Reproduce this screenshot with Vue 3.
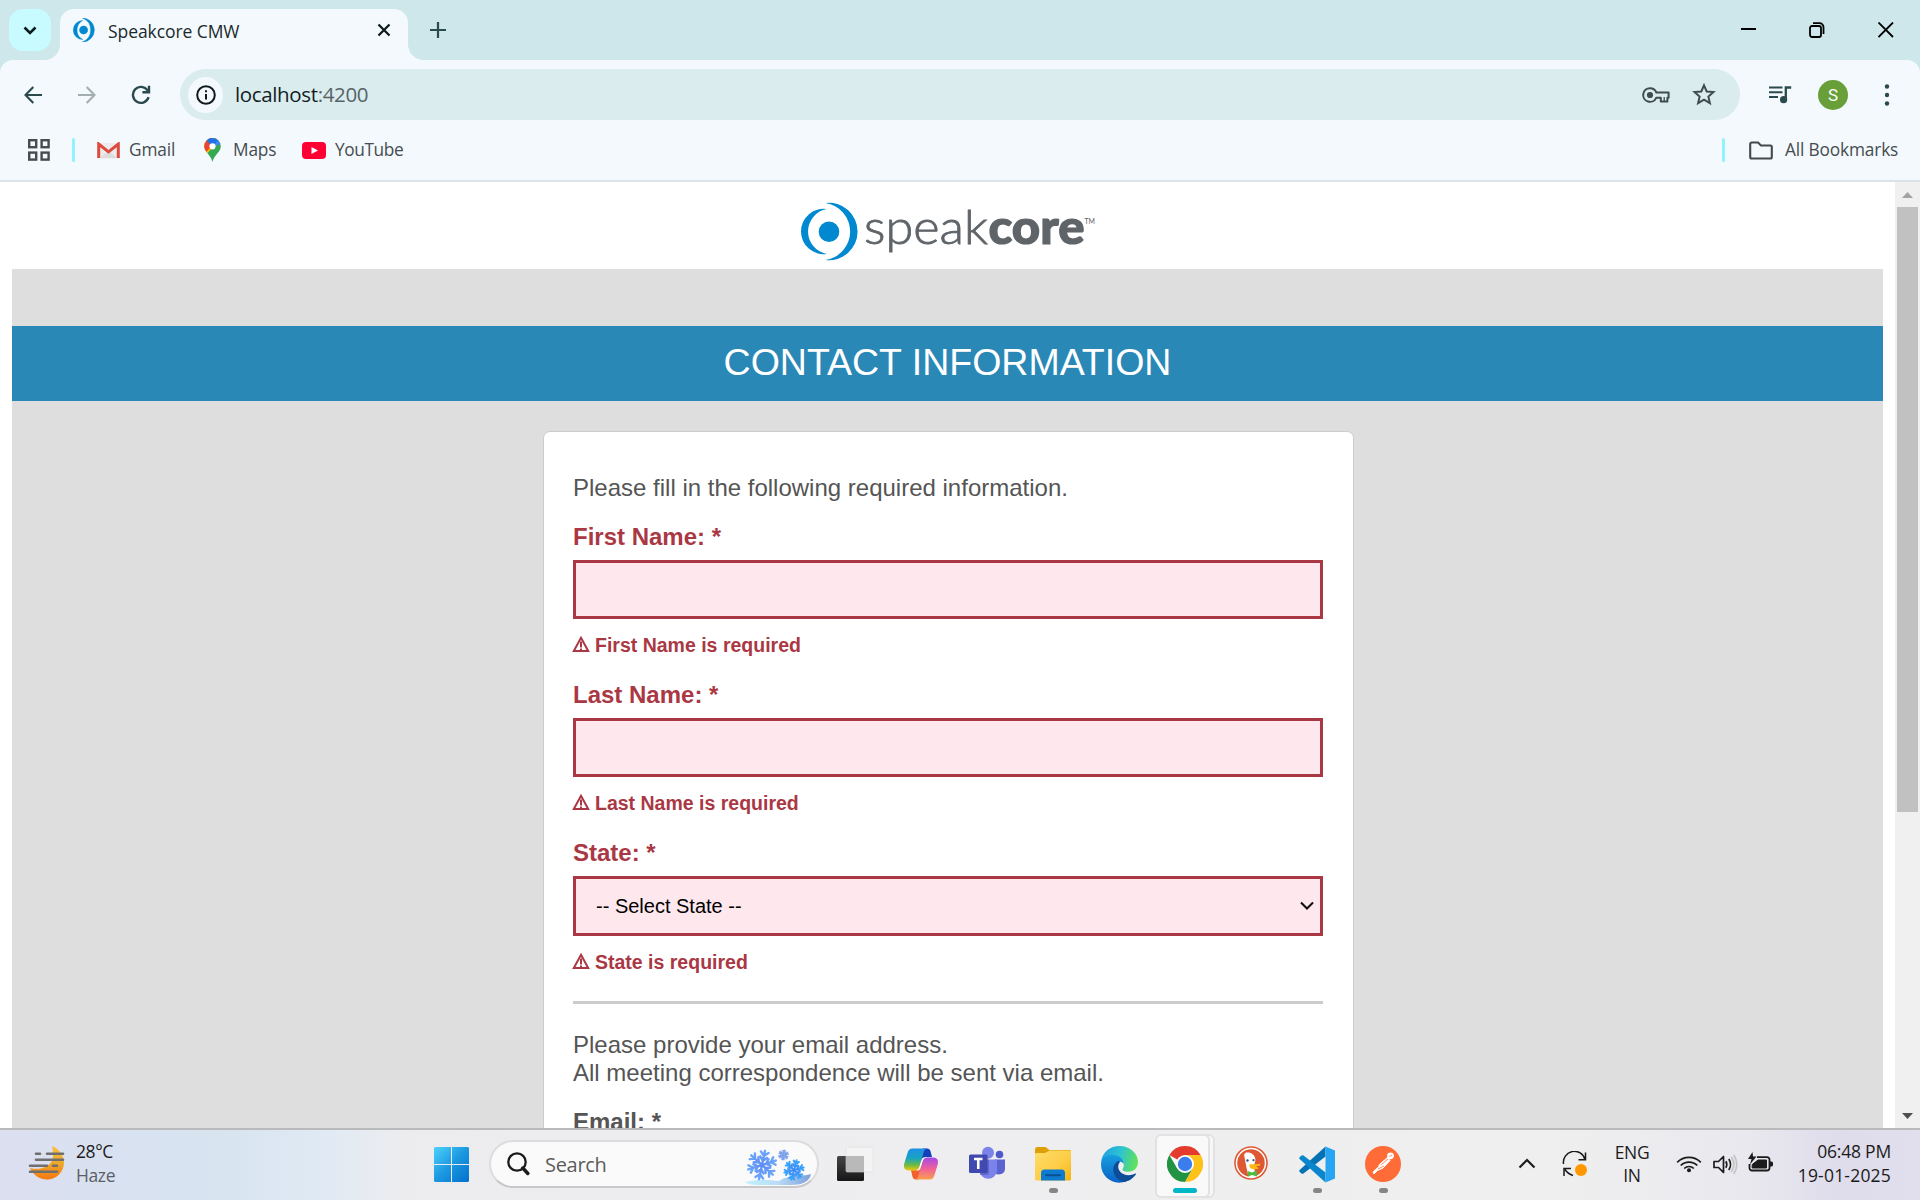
<script setup>
const fields = [
  { label: 'First Name: *', error: 'First Name is required', type: 'input' },
  { label: 'Last Name: *', error: 'Last Name is required', type: 'input' },
  { label: 'State: *', error: 'State is required', type: 'select' },
]
const flakes = [
  { t: 'translate(18 16) rotate(12)', s: 14.5, w: 2.4, c: 'url(#flakeBlue)' },
  { t: 'translate(39.5 6) rotate(8)', s: 5, w: 1.2, c: '#7ba0ea' },
  { t: 'translate(50 21) rotate(15)', s: 10, w: 2, c: 'url(#flakeCyan)' },
]
const arms = [0, 60, 120, 180, 240, 300]
</script>

<template>
  <div class="screen">
    <header class="tabstrip">
      <div class="tabsearch">
        <svg width="14" height="9" viewBox="0 0 14 9"><path d="M1.5 1.5L7 7l5.500-5.500" fill="none" stroke="#0b1a1c" stroke-width="2.6" /></svg>
      </div>
      <div class="tab">
        <svg class="favicon" width="24" height="24" viewBox="0 0 58 58"><circle cx="28" cy="29" r="10.5" fill="#0089d1" /><path d="M26 6A23 23 0 1 0 26 52A26 26 0 0 1 26 6ZM25 0A28.7 28.7 0 1 1 25 58A31 31 0 0 0 25 0Z" fill="#0089d1" stroke="#0089d1" stroke-width="1" /></svg>
        <span class="tabtitle">Speakcore CMW</span>
        <svg class="tabclose" width="14" height="14" viewBox="0 0 14 14"><path d="M1.5 1.5l11 11M12.5 1.5l-11 11" stroke="#101b1d" stroke-width="2.3" /></svg>
      </div>
      <svg class="newtab" width="16" height="16" viewBox="0 0 16 16"><path d="M8 0v16M0 8h16" stroke="#2b4a4e" stroke-width="2.2" /></svg>
      <div class="wincontrols">
        <svg width="16" height="16" viewBox="0 0 16 16"><path d="M1 7h15" stroke="#000" stroke-width="2" /></svg>
        <svg width="16" height="16" viewBox="0 0 16 16" fill="none" stroke="#000" stroke-width="1.8"><rect x="1" y="4" width="11" height="11" rx="2" /><path d="M4 1.2h6.5a4 4 0 0 1 4 4V12" /></svg>
        <svg width="16" height="16" viewBox="0 0 16 16"><path d="M.5 .5l14.5 14.5M15 .5L.5 15" stroke="#000" stroke-width="1.8" /></svg>
      </div>
    </header>

    <div class="chrome">
      <div class="toolbar">
        <svg class="back" width="18" height="18" viewBox="0 0 18 18" fill="none" stroke="#2b4a4e" stroke-width="2.1"><path d="M18 9H1.8M9.3 1L1.5 9l7.8 8" /></svg>
        <svg class="forward" width="18" height="18" viewBox="0 0 18 18" fill="none" stroke="#a2aeb0" stroke-width="2.1"><path d="M0 9h16.2M8.7 1l7.8 8-7.8 8" /></svg>
        <svg class="reload" width="20" height="20" viewBox="0 0 20 20" fill="none" stroke="#2b4a4e" stroke-width="2.4"><path d="M17.6 12.2A8 8 0 1 1 16.6 5.4L18 7" /><path d="M18 .8V7.2h-6.6" /></svg>
        <div class="omnibox">
          <div class="info">
            <svg width="20" height="20" viewBox="0 0 20 20"><circle cx="10" cy="10" r="8.8" fill="none" stroke="#10191b" stroke-width="2" /><path d="M10 9v5.6M10 5.2v2.1" stroke="#10191b" stroke-width="2" /></svg>
          </div>
          <span class="url">localhost<i>:4200</i></span>
          <svg class="key" width="28" height="16" viewBox="0 0 28 16"><path d="M8 1.2a6.8 6.8 0 1 0 6.2 9.6h4.6v3.6h6.6V10.8h1.2V5.6H14.4A6.8 6.8 0 0 0 8 1.2Z" fill="none" stroke="#3f4c4f" stroke-width="2" stroke-linejoin="round" /><circle cx="8" cy="8" r="3.1" fill="#3f4c4f" /><path d="M22.2 10v4" stroke="#3f4c4f" stroke-width="1.3" /></svg>
          <svg class="star" width="24" height="23" viewBox="0 0 24 23"><path d="M12 2.3l2.7 6.2 6.8.6-5.1 4.5 1.5 6.6-5.9-3.5-5.9 3.5 1.5-6.6L2.5 9.1l6.8-.6Z" fill="none" stroke="#3f4c4f" stroke-width="2" /></svg>
        </div>
        <svg class="media" width="24" height="18" viewBox="0 0 24 18"><path d="M1 1.500h13.500M1 6.200h13.500M1 11h9" stroke="#2b4a4e" stroke-width="2.1" /><path d="M17.800 13.500V1.500h5.400" fill="none" stroke="#2b4a4e" stroke-width="2.3" /><circle cx="15.600" cy="13.700" r="3.600" fill="#2b4a4e" /></svg>
        <div class="avatar">S</div>
        <svg class="dots" width="6" height="22" viewBox="0 0 6 22" fill="#2b4a4e"><circle cx="3" cy="2.5" r="2.2" /><circle cx="3" cy="11" r="2.2" /><circle cx="3" cy="19.5" r="2.2" /></svg>
      </div>
      <div class="bookmarks">
        <svg class="apps" width="22" height="22" viewBox="0 0 22 22" fill="none" stroke="#464c50" stroke-width="2.4"><rect x="1.2" y="1.2" width="7" height="7" /><rect x="13.6" y="1.2" width="7" height="7" /><rect x="1.2" y="13.6" width="7" height="7" /><rect x="13.6" y="13.6" width="7" height="7" /></svg>
        <b class="sep"></b>
        <div class="mark gmail">
          <svg width="23" height="17" viewBox="0 0 23 17"><rect x="1" y="1" width="21" height="15.5" fill="#ececec" /><path d="M3 16l8.5-7 8.5 7Z" fill="#dcdcdc" /><path d="M1.7 16V2l9.8 7.8L21.300 2V16" fill="none" stroke="#dd4b3e" stroke-width="3" /></svg>
          <span>Gmail</span>
        </div>
        <div class="mark maps">
          <svg width="17" height="24" viewBox="0 0 17 24"><defs><clipPath id="pin"><path d="M8.500 0A8.300 8.300 0 0 0 .2 8.300C.2 14 7 17 8.500 24 10 17 16.800 14 16.800 8.300A8.300 8.300 0 0 0 8.500 0Z" /></clipPath></defs><g clip-path="url(#pin)"><path d="M0 0h17v24H0Z" fill="#34a853" /><path d="M0 0h17L0 19Z" fill="#fbbc04" /><path d="M0 0h8v8L2 14 0 9Z" fill="#ea4335" /><path d="M2 2L9 8.500 17 0V0H0Z" fill="#1a73e8" /><path d="M9 8.500L14 2 17 4 17 6Z" fill="#4285f4" /></g><circle cx="8.500" cy="8.300" r="3.100" fill="#fff" /></svg>
          <span>Maps</span>
        </div>
        <div class="mark tube">
          <svg width="24" height="17" viewBox="0 0 24 17"><rect width="24" height="17" rx="4" fill="#ff0033" /><path d="M9.500 5v7l6.500-3.500Z" fill="#fff" /></svg>
          <span>YouTube</span>
        </div>
        <b class="sep right"></b>
        <svg class="folder" width="24" height="19" viewBox="0 0 24 19"><path d="M1.200 3A1.500 1.500 0 0 1 2.700 1.500H9L12 4.500h9.500A1.300 1.300 0 0 1 22.800 6v10a1.500 1.500 0 0 1-1.500 1.500H2.700A1.500 1.500 0 0 1 1.200 16Z" fill="none" stroke="#44494d" stroke-width="2.100" /></svg>
        <span class="allbm">All Bookmarks</span>
      </div>
    </div>

    <div class="viewport">
      <main class="page">
        <div class="brand">
          <svg width="296" height="58" viewBox="0 0 296 58">
            <circle cx="28" cy="28.700" r="10.300" fill="#0089d1" />
            <path d="M25.700 6A22.700 22.700 0 1 0 25.700 51A22.900 22.900 0 0 1 25.700 6Z" fill="#0089d1" />
            <path d="M24.500 0A28.700 28.700 0 1 1 24.500 57A28.800 28.800 0 0 0 24.500 0Z" fill="#0089d1" />
            <text class="thin" x="63" y="40.500" textLength="124" lengthAdjust="spacingAndGlyphs">speak</text>
            <text class="fat" x="187.500" y="40.500" textLength="96" lengthAdjust="spacingAndGlyphs">core</text>
            <text class="tm" x="283.500" y="21" textLength="10.500" lengthAdjust="spacingAndGlyphs">TM</text>
          </svg>
        </div>
        <div class="canvas">
          <h1>CONTACT INFORMATION</h1>
          <section class="card">
            <p class="lead">Please fill in the following required information.</p>
            <div v-for="f in fields" :key="f.label" class="field" :class="f.type">
              <label>{{ f.label }}</label>
              <div class="control">
                <template v-if="f.type === 'select'">
                  <span>-- Select State --</span>
                  <svg width="14" height="10" viewBox="0 0 14 10"><path d="M1 1.500l6 6 6-6" fill="none" stroke="#111" stroke-width="2.100" /></svg>
                </template>
              </div>
              <div class="error">
                <svg width="18" height="17" viewBox="0 0 18 17"><path d="M9 1.800L16.200 15H1.800Z" fill="none" stroke="#aa3844" stroke-width="2" /><path d="M9 5.500v6M9 12.500v2" stroke="#aa3844" stroke-width="2" /></svg>
                <span>{{ f.error }}</span>
              </div>
            </div>
            <hr />
            <p class="lead second">Please provide your email address.<br />All meeting correspondence will be sent via email.</p>
            <label class="plain">Email: *</label>
          </section>
        </div>
      </main>
      <aside class="scrollbar">
        <svg width="25" height="25" viewBox="0 0 25 25"><path d="M7 16h11l-5.500-6Z" fill="#a3a3a3" /></svg>
        <div class="thumb"></div>
        <svg class="down" width="25" height="25" viewBox="0 0 25 25"><path d="M7 10h11l-5.500 6Z" fill="#505050" /></svg>
      </aside>
    </div>

    <footer class="taskbar">
      <div class="weather">
        <svg width="38" height="36" viewBox="0 0 38 36"><defs><linearGradient id="moon" x1="0" y1="0" x2="0" y2="1"><stop offset="0" stop-color="#fcbf38" /><stop offset=".5" stop-color="#efa92a" /><stop offset="1" stop-color="#f4780f" /></linearGradient></defs><path d="M24 1C31 4 36 10 36 18A17 17 0 0 1 19 34.500C12 34.500 5 30 2 23c11 3 22-2 23-11 .400-4-.400-8-1-11Z" fill="url(#moon)" /><path d="M8 8.700h4M19 8.700h16M8 14.700h27M2 20.700h17M25 20.700h4M2 26.700h27" stroke="#6f6f70" stroke-width="2.600" stroke-linecap="round" /></svg>
        <div class="lines"><span>28°C</span><span class="dim">Haze</span></div>
      </div>
      <svg class="start" width="35" height="35" viewBox="0 0 35 35"><defs><linearGradient id="win" x1="0" y1="0" x2="1" y2="1"><stop offset="0" stop-color="#4cd2fd" /><stop offset=".5" stop-color="#1b98e0" /><stop offset="1" stop-color="#0470cd" /></linearGradient></defs><path d="M1 0H17V17H0V1ZM18 0H34L35 1V17H18ZM0 18H17V35H1L0 34ZM18 18H35V34L34 35H18Z" fill="url(#win)" /></svg>
      <div class="search">
        <svg width="23" height="24" viewBox="0 0 23 24"><circle cx="10" cy="10" r="8.700" fill="none" stroke="#1b1b1b" stroke-width="2.300" /><path d="M15.800 16l5 5.500" stroke="#1b1b1b" stroke-width="3.400" stroke-linecap="round" /></svg>
        <span>Search</span>
        <svg class="snow" width="68" height="38" viewBox="0 0 68 38">
          <defs>
            <linearGradient id="flakeBlue" gradientUnits="userSpaceOnUse" x1="0" y1="-15" x2="0" y2="15"><stop offset="0" stop-color="#6ba9fb" /><stop offset="1" stop-color="#5570f0" /></linearGradient>
            <linearGradient id="flakeCyan" gradientUnits="userSpaceOnUse" x1="0" y1="-10" x2="0" y2="10"><stop offset="0" stop-color="#36a4fb" /><stop offset="1" stop-color="#4a6cf0" /></linearGradient>
            <linearGradient id="drift" x1="0" y1="0" x2="1" y2="0"><stop offset="0" stop-color="#c3f3fb" /><stop offset=".5" stop-color="#b9dcf8" /><stop offset="1" stop-color="#7d9fdb" /></linearGradient>
          </defs>
          <path d="M1 33C12 30 27 31 35 32 45 25 57 28 67 25 66 33 57 36 47 36H12C7 36 3 35 1 33Z" fill="url(#drift)" />
          <g v-for="f in flakes" :key="f.t" :transform="f.t" fill="none" :stroke="f.c" :stroke-width="f.w" stroke-linecap="round">
            <path v-for="a in arms" :key="a" :transform="`rotate(${a})`" :d="`M.01 0L0 ${-f.s}M${-f.s * 0.27} ${-f.s * 0.9}L0 ${-f.s * 0.65}L${f.s * 0.27} ${-f.s * 0.9}M${-f.s * 0.24} ${-f.s * 0.55}L0 ${-f.s * 0.3}L${f.s * 0.24} ${-f.s * 0.55}`" />
          </g>
        </svg>
      </div>
      <nav class="pinned">
        <div class="slot">
          <svg width="36" height="36" viewBox="0 0 36 36"><defs><linearGradient id="tv" x1="0" y1="0" x2="0" y2="1"><stop offset="0" stop-color="#454545" /><stop offset="1" stop-color="#161616" /></linearGradient></defs><rect x="0" y="10" width="27" height="25" rx="1.500" fill="url(#tv)" /><rect x="9" y="1" width="27" height="25" rx="1.500" fill="#f3f3f3" fill-opacity=".9" stroke="#ddd" stroke-width=".6" /><rect x="9" y="10" width="18" height="16" fill="#b9b9b9" /></svg>
        </div>
        <div class="slot">
          <svg width="36" height="36" viewBox="0 0 36 36"><defs><linearGradient id="cpA" x1="0" y1="0" x2="0" y2="1"><stop offset="0" stop-color="#1f8fe8" /><stop offset=".45" stop-color="#17a5c0" /><stop offset=".75" stop-color="#6cba45" /><stop offset="1" stop-color="#f0c70c" /></linearGradient><linearGradient id="cpB" x1="0" y1="0" x2="0" y2="1"><stop offset="0" stop-color="#a34be8" /><stop offset=".5" stop-color="#ef5f9c" /><stop offset="1" stop-color="#fb9f4a" /></linearGradient></defs><path d="M20 2.500h4c2 0 3 1.200 3.600 3L29 11h-7l-4 4Z" fill="#1440ba" /><path d="M16 33.500h-3c-2 0-3-1-3.600-3L8 24h6l5-5Z" fill="#f2602c" /><path d="M9.500 2.500H24c-2 .6-2.800 2-3.400 4l-4 14c-.8 2.800-2.200 4-5 4H6c-4.500 0-5.800-3-4.700-7L4.500 7c.9-3 2-4.500 5-4.500Z" fill="url(#cpA)" /><path d="M26.500 33.500H12c2-.6 2.800-2 3.400-4l4-14c.8-2.800 2.200-4 5-4H30c4.500 0 5.800 3 4.700 7L31.500 29c-.9 3-2 4.500-5 4.500Z" fill="url(#cpB)" /><path d="M20.500 11.500h3.800c-2.800 0-4.100 1.200-4.900 4l-2 7c-.8 1.800-2 2-3.200 2h-2.600c2.800 0 4.200-1.200 5-4l2-6.500c.5-1.700 1-2.100 1.900-2.500Z" fill="#fff" /></svg>
        </div>
        <div class="slot">
          <svg width="36" height="36" viewBox="0 0 36 36"><circle cx="30.500" cy="8.500" r="3.800" fill="#5059c9" /><path d="M26 13.500h10V23a6 6 0 0 1-10 4Z" fill="#5b63cf" /><circle cx="19" cy="6.800" r="6" fill="#7b83eb" /><path d="M10.500 13.500H28V25a8.800 8.800 0 0 1-17.500 0Z" fill="#7b83eb" /><path d="M13 13.500h7V27a2 2 0 0 1-2 2h-7Z" fill="#4c55b8" opacity=".6" /><rect x="0" y="8.500" width="18.500" height="18.500" rx="1.500" fill="#4049b0" /><path d="M5 13h8.500M9.250 13v10" stroke="#fff" stroke-width="2.600" /></svg>
        </div>
        <div class="slot">
          <svg width="36" height="36" viewBox="0 0 36 36"><defs><linearGradient id="fold" x1="0" y1="0" x2="1" y2="1"><stop offset="0" stop-color="#ffdc6a" /><stop offset=".6" stop-color="#fdcc44" /><stop offset="1" stop-color="#f5b40c" /></linearGradient></defs><path d="M0 3.500Q0 1 2 1H10.500L14.500 4H35Q36 4 36 5V12H0Z" fill="#dda005" /><path d="M0 8Q0 7 2 7H10L14.500 4.500H36V33Q36 34.500 34.500 34.500H1.500Q0 34.500 0 33Z" fill="url(#fold)" /><path d="M6 34.500V27a3.500 3.500 0 0 1 3.500-3.500h17A3.500 3.500 0 0 1 30 27v7.500Z" fill="#0f7bd0" /><path d="M11 29.200h14" stroke="#08508f" stroke-width="2" stroke-linecap="round" /></svg>
          <i class="run"></i>
        </div>
        <div class="slot">
          <svg width="37" height="37" viewBox="0 0 36 36"><defs><linearGradient id="eA" x1="0" y1=".3" x2="1" y2=".5"><stop offset="0" stop-color="#229fe5" /><stop offset=".5" stop-color="#2cc4cf" /><stop offset="1" stop-color="#62e15a" /></linearGradient><linearGradient id="eB" x1="0" y1="0" x2="0" y2="1"><stop offset="0" stop-color="#179fe0" /><stop offset="1" stop-color="#0a62c4" /></linearGradient></defs><path d="M0 16C1 6 9 0 18 0 28 0 36 7 36 15.500 36 22 31 25 26.500 25 22.500 25 20.500 23.500 21 22.500 23 20 23 15 18 12 11 8 3 11 0 16Z" fill="url(#eA)" /><path d="M0 18C0 12 5 8.500 11 8.500 17 8.500 22 12.500 22.200 17.500 20 14 14 14 13 20 12.200 27 18 33 25 34 13 39.500 0 30.500 0 18Z" fill="url(#eB)" /><path d="M16.500 14.500C9 18.500 11 32 22 35 27 34.500 31.500 31.500 34 27.500 34.300 27 33.600 26.600 33 27 28 29.500 20.500 28.500 18 24 16 20.500 16.700 17.500 18.500 15.500 18 14.700 17.300 14.300 16.500 14.500Z" fill="#0d4c97" /></svg>
        </div>
        <div class="slot active">
          <svg width="36" height="36" viewBox="0 0 36 36"><path d="M18 18L2.410 9A18 18 0 0 1 33.590 9Z" fill="#e33b2e" /><path d="M2.410 9L10.200 22.500 25.800 22.500 18 36A18 18 0 0 1 2.410 9Z" fill="#229342" /><path d="M18 36L25.800 22.500 18 18V9H33.590A18 18 0 0 1 18 36Z" fill="#fdc117" /><circle cx="18" cy="18" r="9" fill="#fff" /><circle cx="18" cy="18" r="7.200" fill="#3b7ded" /></svg>
          <i class="run on"></i>
        </div>
        <div class="slot">
          <svg width="34" height="34" viewBox="0 0 34 34"><circle cx="17" cy="17" r="16.800" fill="#de5833" /><circle cx="17" cy="17" r="14.500" fill="none" stroke="#fff" stroke-width="1.500" /><path d="M10.500 11C9.500 7.500 11.500 6 13.500 6.500 18 6.500 21 9 21.500 14L20 20 21.500 30.500Q18 31.800 14.500 30.700C13 24 11.500 17 10.500 11Z" fill="#fff" /><path d="M15.500 18.500C18 17.500 22 19 26.500 17.500L25.500 20H22L25 22.500C20 24 15.500 23 15.500 20.500Z" fill="#fdb913" /><path d="M13.500 25l4.500 1.500 5-2v6l-5-1.500-4 1.500Z" fill="#4cba3c" /><circle cx="13.500" cy="14.500" r="1.200" fill="#2d4f8e" /><circle cx="19.500" cy="14.200" r="1.100" fill="#2d4f8e" /></svg>
        </div>
        <div class="slot">
          <svg width="36" height="37" viewBox="0 0 36 36"><path d="M26.500 0V10L4.500 27Q3.500 27.700 2.500 27L.6 25.300Q-.2 24.300.6 23.500Z" fill="#0572b5" /><path d="M26.500 36V26L4.500 9Q3.500 8.300 2.500 9L.6 10.700Q-.2 11.700.6 12.500Z" fill="#0a86cd" /><path d="M26.500 0L36 4V32L26.500 36Z" fill="#27a5f2" /></svg>
          <i class="run"></i>
        </div>
        <div class="slot">
          <svg width="36" height="36" viewBox="0 0 36 36"><circle cx="18" cy="18" r="18" fill="#ff6c37" /><circle cx="25.500" cy="9.800" r="3.400" fill="#fff" /><path d="M22.500 11.500L25 14.500 18 22 12.500 24.500 9 28 8 26 13.500 21 14.500 18.500Z" fill="#fff" stroke="#fff" /><path d="M16 19l7-6M13 23l6-3M24.500 10.500l2.500-1.500" stroke="#ff6c37" stroke-width=".8" /></svg>
          <i class="run"></i>
        </div>
      </nav>
      <div class="tray">
        <svg class="chev" width="18" height="11" viewBox="0 0 18 11"><path d="M1.500 9.500L9 2l7.500 7.500" fill="none" stroke="#1d1d1d" stroke-width="2.200" /></svg>
        <svg class="sync" width="26" height="26" viewBox="0 0 26 26" fill="none" stroke="#1b1b1b" stroke-width="1.500"><path d="M1.500 13A11 11 0 0 1 23 8.500M23.500 1.500v7.200h-7M11 24.500Q6 23 3 18.500M2 25v-7.500h7" /><circle cx="19" cy="19" r="6" fill="#ff9800" stroke="none" /></svg>
        <div class="lang"><span>ENG</span><span>IN</span></div>
        <svg class="wifi" width="26" height="19" viewBox="0 0 26 19" fill="none" stroke="#1b1b1b" stroke-width="1.700"><path d="M1.200 8.300a16.700 16.700 0 0 1 23.600 0M4.700 11.500a11.700 11.700 0 0 1 16.600 0M8.200 14.500a6.800 6.800 0 0 1 9.600 0" /><circle cx="13" cy="16.200" r="2" fill="#1b1b1b" stroke="none" /></svg>
        <svg class="vol" width="25" height="21" viewBox="0 0 25 21" fill="none" stroke="#1b1b1b" stroke-width="1.700"><path d="M1 7.500h4.500L10.500 2.500v16L5.500 13.500H1ZM12.800 7.200q2 3.300 0 6.600" stroke-linejoin="round" /><path d="M15.800 5q3.600 5.500 0 11" /><path d="M18.200 3q5.400 7.500 0 15M20.800 1q6 9.500 0 19" stroke="#c3c3c5" /></svg>
        <svg class="batt" width="26" height="21" viewBox="0 0 26 21"><path d="M9 5.200H19a2.500 2.500 0 0 1 2.500 2.500V16a2.500 2.500 0 0 1-2.500 2.500H4A2.500 2.500 0 0 1 1.500 16V12" fill="none" stroke="#1b1b1b" stroke-width="1.800" /><path d="M10 8h8.500v8H4.200v-3.500Z" fill="#1b1b1b" stroke="#1b1b1b" stroke-linejoin="round" /><path d="M22 9.500h1.500a1.500 1.500 0 0 1 1.500 1.500v2a1.500 1.500 0 0 1-1.500 1.500H22Z" fill="#1b1b1b" /><path d="M4.500 0L0 7h3.500L2 12.500 8.500 4.500H5Z" fill="#1b1b1b" /></svg>
        <div class="clock"><span>06:48 PM</span><span class="date">19-01-2025</span></div>
      </div>
    </footer>
  </div>
</template>

<style>
body { margin: 0; overflow: hidden; }
</style>

<style scoped>
* { box-sizing: border-box; }
svg { display: block; flex: none; }
.screen { width: 1920px; height: 1200px; display: flex; flex-direction: column; overflow: hidden; background: #cde7ea; font-family: "Open Sans", "Noto Sans", sans-serif; white-space: nowrap; }
.tabstrip { height: 60px; flex: none; display: flex; background: #cde7ea; }
.tabsearch { width: 42px; height: 42px; margin: 9px 9px 0; border-radius: 14px; background: #c8fbff; display: flex; align-items: center; justify-content: center; }
.tab { position: relative; width: 348px; height: 51px; margin-top: 9px; border-radius: 14px 14px 0 0; background: #f3f9fc; display: flex; padding-left: 12px; }
.tab::before, .tab::after { content: ""; position: absolute; bottom: 0; width: 15px; height: 15px; }
.tab::before { left: -15px; background: radial-gradient(circle at 0 0, transparent 14.5px, #f3f9fc 15px); }
.tab::after { right: -15px; background: radial-gradient(circle at 100% 0, transparent 14.5px, #f3f9fc 15px); }
.favicon { margin-top: 9px; }
.tabtitle { width: 269px; margin: 8px 0 0 12px; font-size: 17.5px; line-height: 28px; color: #1b2a2c; letter-spacing: -.08px; }
.tabclose { margin-top: 14px; }
.newtab { margin: 22px 0 0 22px; }
.wincontrols { margin: 22px 26px 0 auto; display: flex; gap: 53px; }
.chrome { height: 122px; flex: none; background: #f3f9fc; border-radius: 13px 13px 0 0; border-bottom: 2px solid #d8e4e6; }
.toolbar { display: flex; align-items: center; height: 51px; margin-top: 9px; }
.back { margin-left: 24px; }
.forward { margin-left: 36px; }
.reload { margin-left: 35px; }
.omnibox { width: 1560px; height: 51px; margin-left: 29px; border-radius: 26px; background: #daecee; display: flex; align-items: center; padding-left: 8px; }
.info { width: 35px; height: 36px; border-radius: 50%; background: #f3f9fc; display: flex; align-items: center; justify-content: center; }
.url { width: 1407px; margin-left: 12px; font-size: 20.5px; color: #131d1f; letter-spacing: -.36px; line-height: 30px; padding-bottom: 2px; }
.url i { font-style: normal; color: #566366; }
.star { margin-left: 22px; }
.media { margin-left: 28px; }
.avatar { width: 30px; height: 30px; margin-left: 26px; border-radius: 50%; background: #689f38; color: #fff; font: 17px/31px Roboto, sans-serif; text-align: center; }
.dots { margin-left: 36px; }
.bookmarks { display: flex; align-items: center; height: 60px; font-size: 17.3px; color: #464c50; letter-spacing: -.15px; }
.bookmarks span { line-height: 26px; }
.apps { margin-left: 28px; }
.sep { width: 3px; height: 24px; margin-left: 22px; border-radius: 2px; background: #90f3ff; }
.mark { display: flex; align-items: center; }
.gmail { width: 107px; margin-left: 22px; gap: 9px; }
.maps { width: 98px; gap: 12px; }
.tube { gap: 9px; }
.tube span { letter-spacing: -.4px; }
.sep.right { margin-left: auto; }
.folder { margin-left: 24px; }
.allbm { width: 135px; margin-left: 12px; }

.viewport { flex: none; height: 946px; display: flex; background: #fff; overflow: hidden; font-family: "Liberation Sans", Arial, sans-serif; }
.page { width: 1895px; padding: 0 12px; }
.brand { height: 87px; padding: 21px 0 0 789px; }
.brand svg { overflow: visible; }
.brand text { fill: #5f6469; font-family: Lato, sans-serif; }
.thin { font-size: 48px; font-weight: 300; stroke: #5f6469; stroke-width: .8px; }
.fat { font-size: 48px; font-weight: 900; stroke: #5f6469; stroke-width: 1.2px; }
.tm { font-size: 8px; }
.canvas { width: 1871px; height: 860px; padding-top: 57px; background: #dedede; }
h1 { height: 75px; margin: 0 0 30px; background: #2a88b7; color: #fff; font-size: 37.5px; font-weight: 400; line-height: 73px; text-align: center; }
.card { width: 811px; height: 800px; margin: 0 0 0 531px; border: 1px solid #ccc; border-radius: 7px; background: #fff; padding: 42px 30px 0 29px; }
.lead { margin: 0 0 21px; font-size: 24px; line-height: 28px; color: #555; }
.field { height: 158px; color: #aa3844; }
.field.select { height: 162px; }
label { display: block; height: 37px; font-size: 24px; font-weight: 700; line-height: 28px; }
.control { height: 59px; border: 3px solid #aa3844; background: #ffe8ed; display: flex; align-items: center; justify-content: space-between; padding: 0 6px 0 20px; color: #000; font-size: 20px; }
.select .control { height: 60px; }
.error { display: flex; margin-top: 14px; font-size: 19.5px; font-weight: 700; line-height: 24px; gap: 5px; }
.error svg { margin: 3px 0 0 -1px; }
hr { height: 3px; margin: 0 0 27px; border: 0; background: #ccc; }
.second { margin-bottom: 21px; }
.plain { color: #555; }
.scrollbar { width: 25px; background: #f0f0f0; display: flex; flex-direction: column; }
.thumb { height: 605px; margin: 0 2px; background: #c1c1c1; }
.down { margin-top: auto; }

.taskbar { height: 72px; flex: none; display: flex; border-top: 2px solid #b9babc; background: linear-gradient(90deg, #dcdff0 0, #d8e2f1 130px, #d8e4f0 230px, #e0eaf5 325px, #ececee 400px, #eeeef0 900px, #efefef 1550px, #e9e8ee 1750px, #dfdcec 1840px, #e1dfed 1920px); font-size: 17.5px; color: #1b1b1b; }
.lines, .lang, .clock { display: flex; flex-direction: column; line-height: 24px; }
.weather { width: 434px; padding: 15px 0 0 28px; display: flex; gap: 10px; }
.lines { margin-top: -6px; letter-spacing: -.4px; }
.dim { color: #5b5f66; }
.start { margin-top: 17px; }
.search { width: 330px; height: 48px; margin: 10px 0 0 20px; border: 2px solid #dcdcde; border-bottom-color: #c8c8ca; border-radius: 24px; background: #fafafa; display: flex; padding: 10px 0 0 16px; }
.search span { margin: -1px 0 0 15px; font-size: 20px; line-height: 28px; color: #5c5c5c; letter-spacing: -.3px; }
.snow { margin: -3px 5px 0 auto; }
.pinned { display: flex; margin-left: 3px; }
.slot { width: 66px; height: 70px; display: flex; flex-direction: column; align-items: center; padding-top: 16px; position: relative; }
.slot > svg { position: relative; }
.active::before, .active::after { content: ""; position: absolute; top: 4px; height: 60px; border: 2px solid #e2e2e4; border-radius: 6px; background: #f6f6f7; }
.active::before { left: 9px; width: 50px; }
.active::after { left: 3px; width: 51px; background: #f9f9fa; }
.run { position: absolute; z-index: 2; top: 58px; left: 28.500px; width: 9px; height: 5px; border-radius: 3px; background: #868686; }
.run.on { left: 21px; width: 24px; background: #00b7c7; }
.active > svg { z-index: 1; }
.tray { display: flex; margin-left: auto; width: 402px; }
.chev { margin-top: 28px; }
.sync { margin: 21px 0 0 26px; }
.lang { width: 60px; margin: 11px 0 0 14px; align-items: center; line-height: 23px; letter-spacing: -.4px; }
.wifi { margin: 24px 0 0 14px; }
.vol { margin: 24px 0 0 11px; }
.batt { margin: 22px 0 0 10px; }
.clock { width: 117px; margin-top: 9px; align-items: flex-end; letter-spacing: -.2px; }
.date { letter-spacing: .2px; }
</style>
